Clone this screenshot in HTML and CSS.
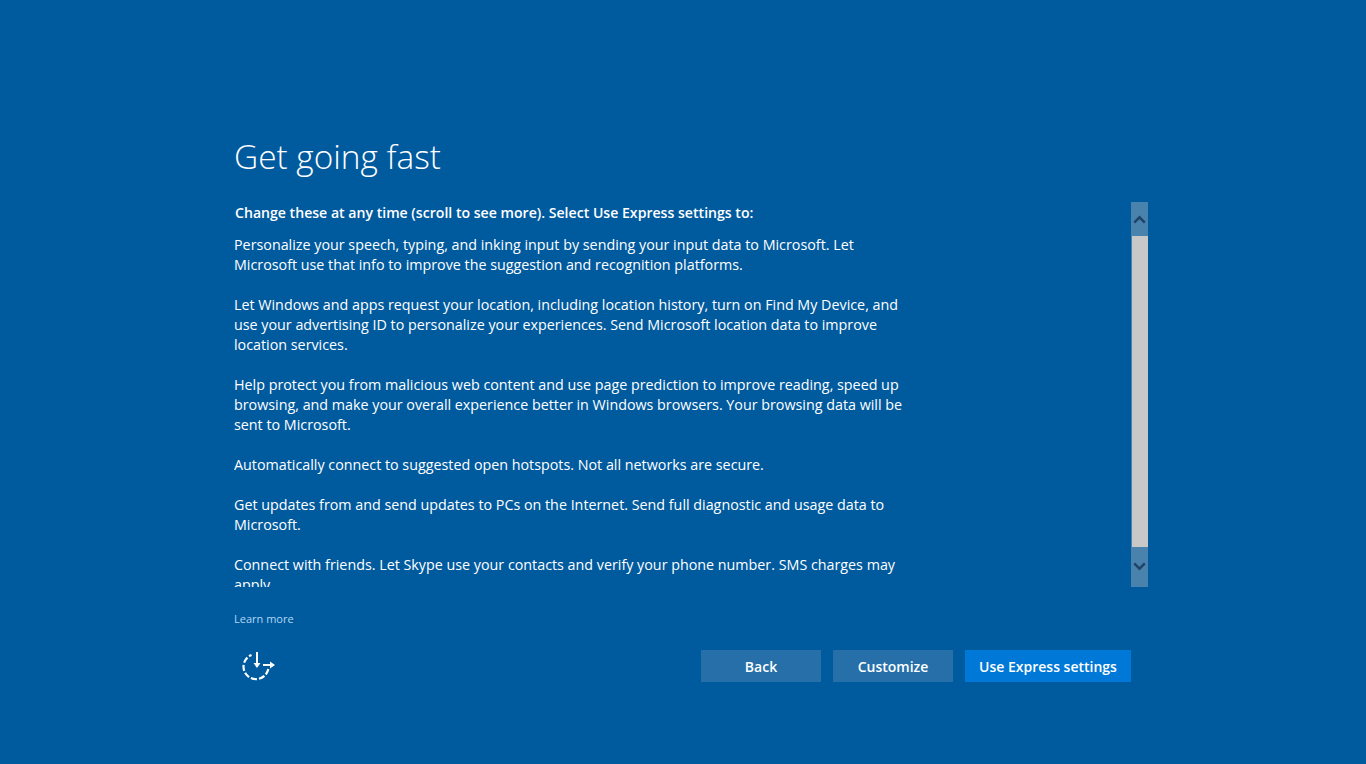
FILE: index.html
```html
<!DOCTYPE html>
<html lang="en">
<head>
<meta charset="utf-8">
<title>Get going fast</title>
<link rel="stylesheet" href="styles.css">
</head>
<body>
<main class="page">
  <h1 class="title">Get going fast</h1>
  <div class="scroller">
    <div class="viewport">
      <p class="lead">Change these at any time (scroll to see more). Select Use Express settings to:</p>
      <p class="para">Personalize your speech, typing, and inking input by sending your input data to Microsoft. Let<br>Microsoft use that info to improve the suggestion and recognition platforms.</p>
      <p class="para">Let Windows and apps request your location, including location history, turn on Find My Device, and<br>use your advertising ID to personalize your experiences. Send Microsoft location data to improve<br>location services.</p>
      <p class="para">Help protect you from malicious web content and use page prediction to improve reading, speed up<br>browsing, and make your overall experience better in Windows browsers. Your browsing data will be<br>sent to Microsoft.</p>
      <p class="para">Automatically connect to suggested open hotspots. Not all networks are secure.</p>
      <p class="para">Get updates from and send updates to PCs on the Internet. Send full diagnostic and usage data to<br>Microsoft.</p>
      <p class="para">Connect with friends. Let Skype use your contacts and verify your phone number. SMS charges may<br>apply.</p>
    </div>
    <div class="scrollbar">
      <div class="arrow">
        <svg width="13" height="9" viewBox="0 0 13 9"><path d="M1.200 7.600 6.500 2.300l5.300 5.300" fill="none" stroke="#1f4468" stroke-width="2.500"/></svg>
      </div>
      <div class="thumb"></div>
      <div class="arrow arrow-end">
        <svg width="13" height="9" viewBox="0 0 13 9"><path d="M1.200 1.400 6.500 6.700l5.300-5.300" fill="none" stroke="#1f4468" stroke-width="2.500"/></svg>
      </div>
    </div>
  </div>
  <a class="learn" href="#">Learn more</a>
  <div class="footer">
    <svg class="access" width="34" height="32" viewBox="0 0 34 32" fill="none" stroke="#fff" stroke-width="2.200">
      <path d="M26.300 19A12.500 12.500 0 1 1 9.500 5" stroke-dasharray="6 2.080"/>
      <path d="M15 2v12" stroke-width="2"/>
      <path d="M11.500 13h7L15 18z" fill="#fff" stroke="none"/>
      <path d="M21 15h8" stroke-width="2"/>
      <path d="M28 11.500 33 15l-5 3.500z" fill="#fff" stroke="none"/>
    </svg>
    <div class="buttons">
      <button class="btn">Back</button>
      <button class="btn">Customize</button>
      <button class="btn primary">Use Express settings</button>
    </div>
  </div>
</main>
</body>
</html>
```
FILE: styles.css
```css
html, body { margin: 0; height: 100%; }
body {
  background: #005a9e;
  color: #fff;
  font-family: "Open Sans", "Noto Sans", sans-serif;
  overflow: hidden;
}
.page {
  width: 914px;
  margin-left: 234px;
  padding-top: 134px;
}
.title {
  margin: 0;
  height: 68px;
  font-size: 33.400px;
  line-height: 44px;
  font-weight: 300;
}
.scroller {
  display: flex;
  justify-content: space-between;
  height: 385px;
}
.viewport {
  width: 700px;
  height: 385px;
  overflow: hidden;
  font-size: 14.300px;
  line-height: 20px;
}
.lead {
  margin: 0 0 12px;
  padding: 1px 0 0 1px;
  font-size: 14.100px;
  font-weight: 600;
}
.para { margin: 0 0 20px; white-space: nowrap; }
.scrollbar {
  width: 17px;
  display: flex;
  flex-direction: column;
  background: #4a82ae;
}
.arrow {
  height: 34px;
  display: flex;
  align-items: center;
  justify-content: center;
}
.arrow-end { height: 40px; padding-bottom: 2px; box-sizing: border-box; }
.thumb { flex: 1; margin-left: 1px; background: #c8c8c8; }
.learn {
  display: block;
  margin-top: 25px;
  height: 20px;
  font-size: 11px;
  line-height: 14px;
  color: #b0d8f4;
  text-decoration: none;
}
.footer {
  display: flex;
  align-items: center;
  justify-content: space-between;
  padding-right: 17px;
  height: 32px;
  margin-top: 18px;
}
.access { margin-left: 8px; }
.buttons { display: flex; gap: 12px; }
.btn {
  width: 120px;
  height: 32px;
  padding: 0;
  border: 0;
  background: #266fa8;
  color: #fff;
  font: 600 14px "Open Sans", "Noto Sans", sans-serif;
}
.primary { width: 166px; background: #0078d7; }
```
